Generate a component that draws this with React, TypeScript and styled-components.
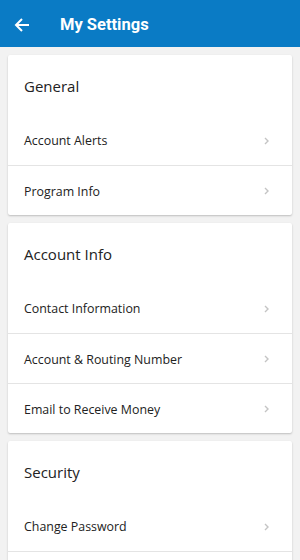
import React from 'react'
import styled, { createGlobalStyle } from 'styled-components'

const GlobalStyle = createGlobalStyle`
  body {
    margin: 0;
    background: #f2f2f2;
    font-family: 'Open Sans', Arial, sans-serif;
  }
`

const Page = styled.div`
  width: 300px;
  height: 560px;
  overflow: hidden;
  background: #f2f2f2;
`

const Toolbar = styled.div`
  height: 47px;
  background: #0a7bc5;
  display: flex;
  align-items: center;
  padding: 2px 0 0 14px;
  box-sizing: border-box;
`

const BackButton = styled.div`
  width: 16px;
  height: 16px;
  display: flex;
  align-items: center;
  margin-right: 30px;
`

const Title = styled.div`
  color: #fff;
  font-family: Roboto, Arial, sans-serif;
  font-weight: 700;
  font-size: 16.5px;
`

const Cards = styled.div`
  display: flex;
  flex-direction: column;
  gap: 8px;
  padding: 8px;
`

const Card = styled.div`
  background: #fff;
  border-radius: 2px;
  box-shadow: 0 1px 2px rgba(0, 0, 0, 0.22);
`

const CardHeading = styled.div`
  height: 60px;
  display: flex;
  align-items: center;
  padding: 1px 16px 0;
  box-sizing: border-box;
  font-size: 15px;
  color: #222;
`

const Row = styled.div`
  height: 50px;
  display: flex;
  align-items: center;
  justify-content: space-between;
  padding: 1px 22px 0 16px;
  box-sizing: border-box;
  font-size: 12.4px;
  color: #222;
  & + & {
    border-top: 1px solid #e4e4e4;
  }
`

const Chevron = () => (
  <svg width="6" height="8" viewBox="0 0 6 8">
    <path d="M1 1l3 3-3 3" fill="none" stroke="#c4c4c4" strokeWidth="1.4" />
  </svg>
)

const sections = [
  { title: 'General', items: ['Account Alerts', 'Program Info'] },
  {
    title: 'Account Info',
    items: ['Contact Information', 'Account & Routing Number', 'Email to Receive Money'],
  },
  { title: 'Security', items: ['Change Password', ''] },
]

const App = () => (
  <Page>
    <GlobalStyle />
    <Toolbar>
      <BackButton>
        <svg width="16" height="16" viewBox="0 0 16 16">
          <path d="M15 8H2M8 2L2 8l6 6" fill="none" stroke="#fff" strokeWidth="2" />
        </svg>
      </BackButton>
      <Title>My Settings</Title>
    </Toolbar>
    <Cards>
      {sections.map((s) => (
        <Card key={s.title}>
          <CardHeading>{s.title}</CardHeading>
          {s.items.map((item, i) => (
            <Row key={i}>
              <span>{item}</span>
              {item && <Chevron />}
            </Row>
          ))}
        </Card>
      ))}
    </Cards>
  </Page>
)

export default App
